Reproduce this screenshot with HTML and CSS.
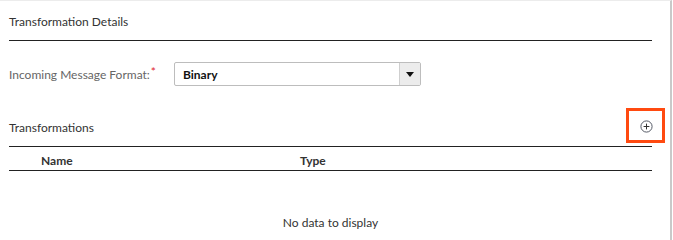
FILE: index.html
```html
<!DOCTYPE html>
<html>
<head>
<meta charset="utf-8">
<link rel="stylesheet" href="styles.css">
</head>
<body>
<div class="panel">
  <div class="section-title">Transformation Details</div>
  <div class="form-row">
    <label class="field-label">Incoming Message Format:<span class="req">*</span></label>
    <div class="select">
      <span class="select-value">Binary</span>
      <span class="select-btn"><span class="caret"></span></span>
    </div>
  </div>
  <div class="sub-head">
    <span class="sub-title">Transformations</span>
    <span class="add-btn">
      <svg width="13" height="13" viewBox="0 0 13 13" aria-hidden="true">
        <circle cx="6.5" cy="6.5" r="5.6" fill="none" stroke="#555a66" stroke-width="1"/>
        <path d="M6.5 3.6v5.8M3.6 6.5h5.8" stroke="#333" stroke-width="1"/>
      </svg>
      <span class="highlight"></span>
    </span>
  </div>
  <div class="table">
    <div class="thead">
      <div class="th">Name</div>
      <div class="th">Type</div>
    </div>
    <div class="empty">No data to display</div>
  </div>
</div>
</body>
</html>
```
FILE: styles.css
```css
html, body {
  margin: 0;
  padding: 0;
  background: #fff;
}
body {
  font-family: "Lato", "Noto Sans", sans-serif;
  font-size: 12px;
  color: #333;
}
.panel {
  width: 672px;
  height: 240px;
  border-top: 1px solid #ececec;
  border-right: 2px solid #c9c9c9;
  box-sizing: border-box;
  padding: 0 18px 0 9px;
}
.section-title {
  height: 40px;
  display: flex;
  align-items: center;
  padding-top: 2px;
  box-sizing: border-box;
  border-bottom: 1px solid #222;
  color: #333;
}
.form-row {
  margin-top: 21px;
  height: 24px;
  display: flex;
  align-items: center;
}
.field-label {
  width: 165px;
  color: #666;
  padding-top: 1px;
}
.req {
  color: #e0252d;
  position: relative;
  top: -3px;
  margin-left: 1px;
}
.select {
  width: 247px;
  height: 24px;
  box-sizing: border-box;
  border: 1px solid #bdbdbd;
  border-radius: 2px;
  display: flex;
  align-items: stretch;
}
.select-value {
  flex: 1;
  display: flex;
  align-items: center;
  padding-left: 8px;
  color: #111;
  font-weight: 700;
}
.select-btn {
  width: 20px;
  border-left: 1px solid #cfcfcf;
  background: #ececec;
  display: flex;
  align-items: center;
  justify-content: center;
}
.caret {
  width: 0;
  height: 0;
  border-left: 4px solid transparent;
  border-right: 4px solid transparent;
  border-top: 5px solid #111;
}
.sub-head {
  margin-top: 23px;
  height: 34px;
  display: flex;
  align-items: center;
  justify-content: space-between;
}
.sub-title {
  color: #333;
  padding-top: 2px;
}
.add-btn {
  position: relative;
  width: 13px;
  height: 13px;
  margin-right: -1px;
  display: flex;
}
.highlight {
  position: absolute;
  left: -14px;
  top: -12px;
  width: 39px;
  height: 35px;
  box-sizing: border-box;
  border: 3px solid #ff4a10;
}
.table {
  margin-top: 3px;
}
.thead {
  display: grid;
  grid-template-columns: 259px 1fr;
  height: 25px;
  padding-top: 3px;
  box-sizing: border-box;
  border-top: 1px solid #222;
  border-bottom: 1px solid #222;
  align-items: center;
}
.th {
  padding-left: 32px;
  font-weight: 700;
  color: #333;
}
.empty {
  height: 59px;
  display: flex;
  align-items: flex-end;
  justify-content: center;
  box-sizing: border-box;
  color: #333;
}
```
